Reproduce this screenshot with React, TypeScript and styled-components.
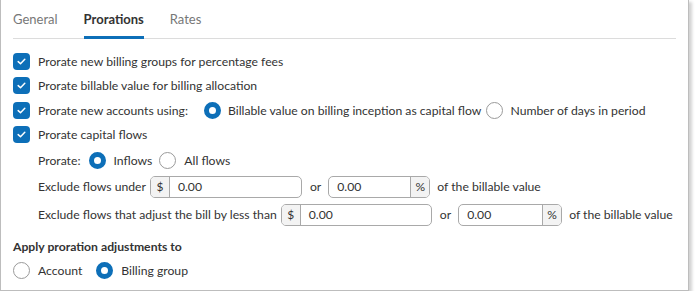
import React from "react";
import styled, { createGlobalStyle } from "styled-components";

const Global = createGlobalStyle`
  html, body { margin: 0; padding: 0; background: #fff; }
  body { font-family: Lato, "Noto Sans", sans-serif; color: #333; font-size: 12.2px; }
`;

const Panel = styled.div`
  box-sizing: border-box;
  width: 689px;
  height: 292px;
  margin-top: -1px;
  border: 1px solid #bdbdbd;
  background: #fff;
  box-shadow: 3px 3px 3px rgba(0, 0, 0, 0.18);
  padding: 0 12px;
`;

const Tabs = styled.div`
  display: flex;
  gap: 26px;
  height: 39px;
  border-bottom: 1px solid #dcdcdc;
  box-sizing: border-box;
  margin-bottom: 10px;
`;

const Tab = styled.div<{ $active?: boolean }>`
  position: relative;
  padding-top: 11px;
  font-size: 13px;
  font-weight: ${(p) => (p.$active ? 700 : 400)};
  color: ${(p) => (p.$active ? "#333" : "#777")};
  &::after {
    content: "";
    display: ${(p) => (p.$active ? "block" : "none")};
    position: absolute;
    left: 0;
    right: 0;
    bottom: -1px;
    height: 3px;
    background: #0d6fb8;
  }
`;

const Row = styled.div<{ $indent?: number; $h?: number; $gap?: number }>`
  display: flex;
  align-items: center;
  height: ${(p) => p.$h ?? 24.5}px;
  padding-left: ${(p) => p.$indent ?? 0}px;
  gap: ${(p) => p.$gap ?? 8}px;
  white-space: nowrap;
`;

const Box = styled.span`
  box-sizing: border-box;
  width: 17px;
  height: 17px;
  border-radius: 4px;
  background: #0d6fb8;
  display: inline-flex;
  align-items: center;
  justify-content: center;
  flex: none;
`;

const Check = () => (
  <Box>
    <svg width="11" height="11" viewBox="0 0 11 11">
      <path d="M2.2 5.6 L4.5 7.8 L8.8 3.3" stroke="#fff" strokeWidth="1.5" fill="none" strokeLinecap="round" strokeLinejoin="round" />
    </svg>
  </Box>
);

const RadioCircle = styled.span<{ $on?: boolean }>`
  box-sizing: border-box;
  width: 17px;
  height: 17px;
  border-radius: 50%;
  flex: none;
  border: ${(p) => (p.$on ? "5px solid #0d6fb8" : "1px solid #9a9a9a")};
  background: #fff;
`;

const RadioItem = styled.span<{ $gap?: number }>`
  display: inline-flex;
  align-items: center;
  gap: ${(p) => p.$gap ?? 7}px;
`;

const Radio = ({ on, label, gap }: { on?: boolean; label: string; gap?: number }) => (
  <RadioItem $gap={gap}>
    <RadioCircle $on={on} />
    <span>{label}</span>
  </RadioItem>
);

const Group = styled.span<{ $gap?: number; $ml?: number }>`
  display: inline-flex;
  align-items: center;
  gap: ${(p) => p.$gap ?? 6}px;
  margin-left: ${(p) => p.$ml ?? 0}px;
`;

const Field = styled.span<{ $w: number }>`
  box-sizing: border-box;
  display: inline-flex;
  align-items: stretch;
  width: ${(p) => p.$w}px;
  height: 22px;
  border: 1px solid #a9a9a9;
  border-radius: 5px;
  overflow: hidden;
  flex: none;
`;

const Addon = styled.span<{ $side: "left" | "right" }>`
  width: 18px;
  display: flex;
  align-items: center;
  justify-content: center;
  background: #f3f3f3;
  font-size: 12px;
  ${(p) => (p.$side === "left" ? "border-right: 1px solid #a9a9a9;" : "border-left: 1px solid #a9a9a9;")}
`;

const Value = styled.span`
  flex: 1;
  display: flex;
  align-items: center;
  padding-left: 8px;
`;

const Heading = styled.div`
  font-weight: 700;
  margin-top: 6px;
  height: 22px;
  display: flex;
  align-items: center;
`;

export default function App() {
  return (
    <>
      <Global />
      <Panel>
        <Tabs>
          <Tab>General</Tab>
          <Tab $active>Prorations</Tab>
          <Tab>Rates</Tab>
        </Tabs>
        <Row>
          <Check />
          Prorate new billing groups for percentage fees
        </Row>
        <Row>
          <Check />
          Prorate billable value for billing allocation
        </Row>
        <Row>
          <Check />
          Prorate new accounts using:
          <Group $gap={5} $ml={8}>
            <Radio on label="Billable value on billing inception as capital flow" />
            <Radio label="Number of days in period" />
          </Group>
        </Row>
        <Row>
          <Check />
          Prorate capital flows
        </Row>
        <Row $indent={25} $h={26}>
          Prorate:
          <Group $gap={7} $ml={1}>
            <Radio on label="Inflows" />
            <Radio label="All flows" gap={8} />
          </Group>
        </Row>
        <Row $indent={25} $h={27} $gap={4}>
          Exclude flows under
          <Field $w={152}>
            <Addon $side="left">$</Addon>
            <Value>0.00</Value>
          </Field>
          <Group $gap={7} $ml={4}>
            or
            <Field $w={102}>
              <Value>0.00</Value>
              <Addon $side="right">%</Addon>
            </Field>
            of the billable value
          </Group>
        </Row>
        <Row $indent={25} $h={29} $gap={4}>
          Exclude flows that adjust the bill by less than
          <Field $w={151}>
            <Addon $side="left">$</Addon>
            <Value>0.00</Value>
          </Field>
          <Group $gap={7} $ml={4}>
            or
            <Field $w={104}>
              <Value>0.00</Value>
              <Addon $side="right">%</Addon>
            </Field>
            of the billable value
          </Group>
        </Row>
        <Heading>Apply proration adjustments to</Heading>
        <Row $h={26}>
          <Group $gap={14}>
            <Radio label="Account" gap={8} />
            <Radio on label="Billing group" gap={8} />
          </Group>
        </Row>
      </Panel>
    </>
  );
}
